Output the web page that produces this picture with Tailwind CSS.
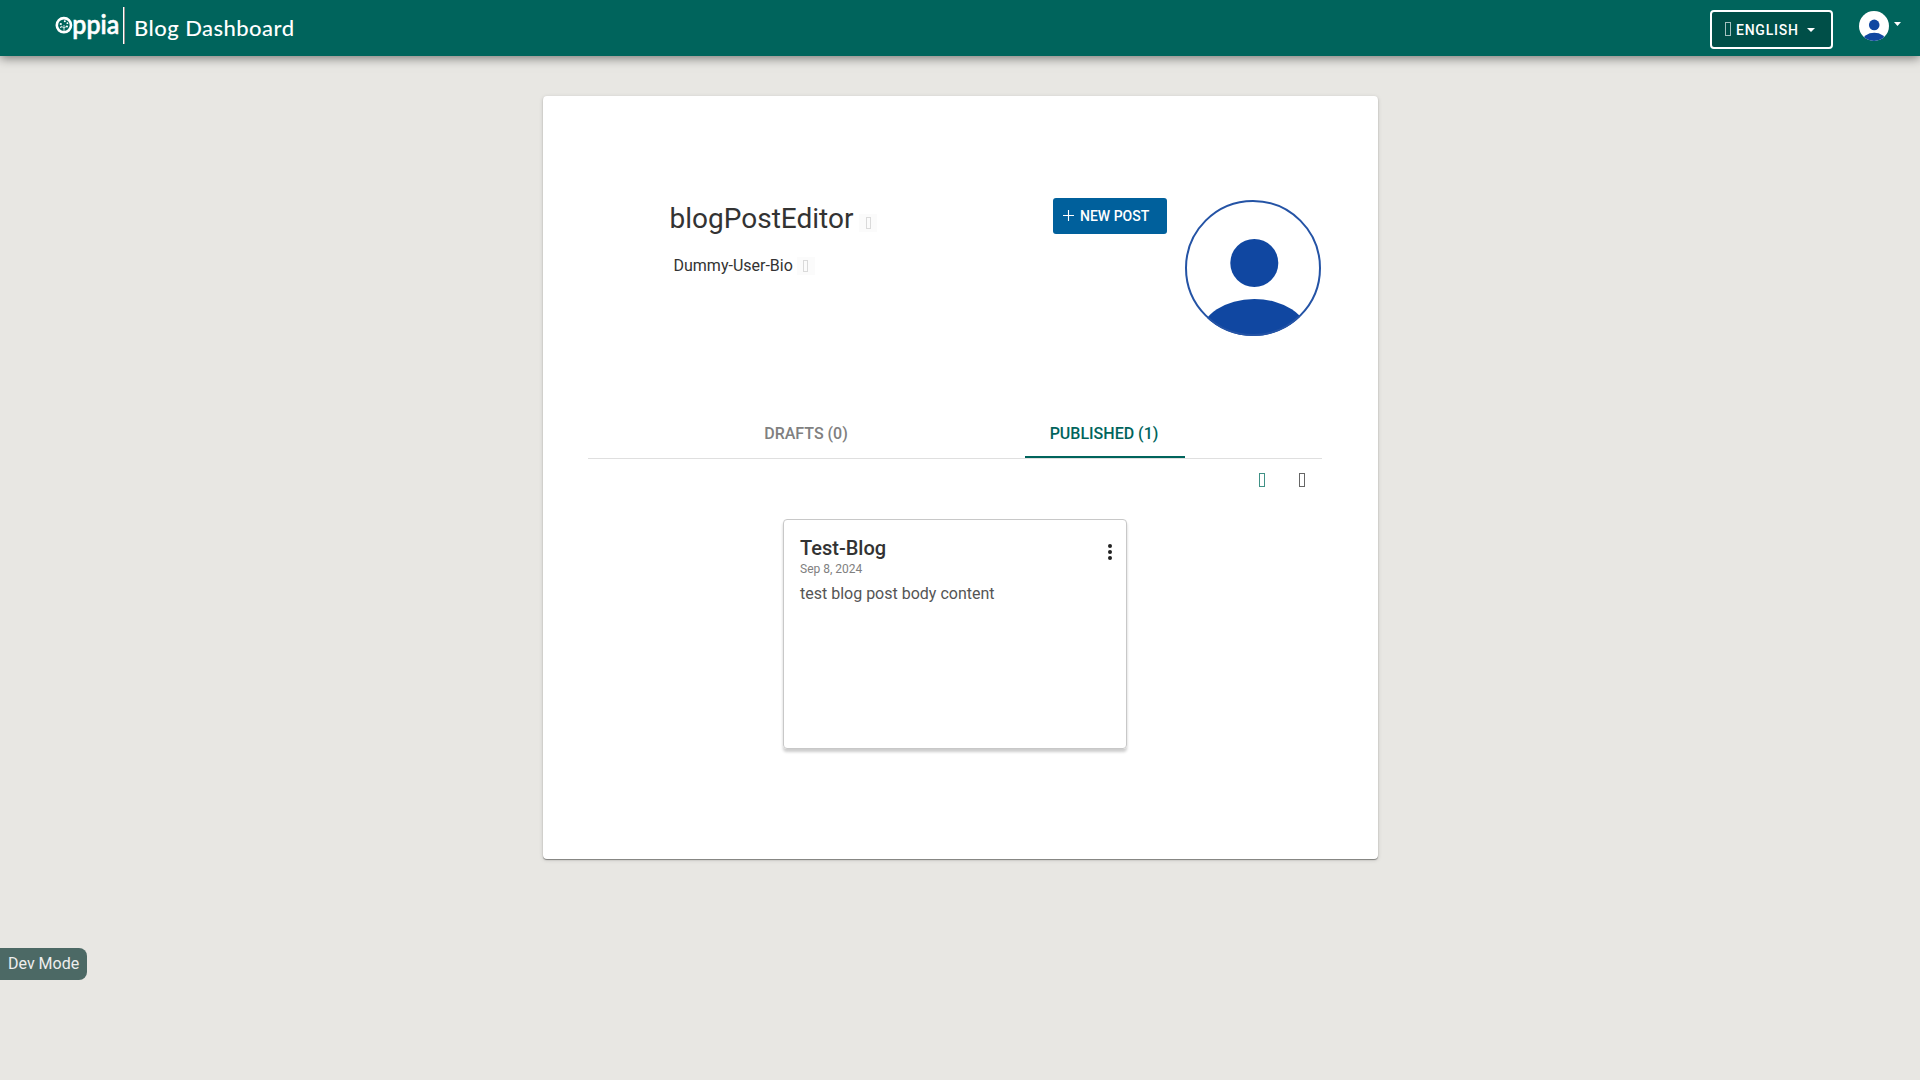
<!DOCTYPE html>
<html lang="en">
<head>
<meta charset="utf-8">
<title>Blog Dashboard | Oppia</title>
<script src="https://cdn.jsdelivr.net/npm/@tailwindcss/browser@4"></script>
</head>
<body class="min-h-screen overflow-hidden bg-[#e8e7e3] font-['Roboto',sans-serif] text-[#333]">
<header class="flex h-14 items-start bg-[#00645c] pl-[54px] text-white shadow-[0_2px_10px_rgba(0,0,0,0.5)]">
  <div class="flex h-14">
    <svg class="h-14 w-[67px]" viewBox="0 0 67 56" fill="none" stroke="#fff">
      <circle cx="9.9" cy="25.2" r="7.1" stroke-width="2.6"/>
      <path d="M10 32v-7M10 28l-3-2M10 28l3-2" stroke-width=".8"/>
      <g fill="#fff" stroke="none"><circle cx="10.8" cy="21.3" r="1"/><circle cx="13.4" cy="23.2" r=".9"/><circle cx="6.8" cy="24" r="1.1"/><circle cx="13" cy="26.6" r="1"/><circle cx="6.8" cy="27.3" r=".8"/></g>
      <text x="18.3" y="34" fill="#fff" stroke="#fff" stroke-width=".5" font-family="Lato, sans-serif" font-weight="600" font-size="26" textLength="47" lengthAdjust="spacingAndGlyphs">ppia</text>
    </svg>
    <div class="mt-[7px] ml-[2px] h-[37px] w-[2px] border-r border-[#9a8f8d] bg-white"></div>
    <h1 class="ml-[9px] pt-[13px] font-['Lato',sans-serif] text-[22px] leading-[30px] font-medium tracking-[0.46px] whitespace-nowrap">Blog Dashboard</h1>
  </div>
  <button class="mt-[10px] ml-auto flex h-[39px] w-[123px] items-center rounded-[4px] border-2 border-white bg-[#004f48] pl-[13px]">
    <svg class="h-[14px] w-[6px] -translate-y-[1px]" viewBox="0 0 6 14" fill="none" stroke="#fff" stroke-opacity=".65"><rect x=".5" y=".5" width="5" height="13"/></svg>
    <span class="ml-[5px] text-sm font-medium tracking-[0.75px]">ENGLISH</span>
    <svg class="ml-[8px] h-1 w-2" viewBox="0 0 8 4" fill="#fff"><path d="M0 0h8L4 4z"/></svg>
  </button>
  <div class="mt-[11px] mr-[19px] ml-[26px] flex items-start gap-[5px]">
    <svg class="h-[30px] w-[30px]" viewBox="0 0 136 136"><defs><clipPath id="disc"><circle cx="68" cy="68" r="68"/></clipPath></defs><g clip-path="url(#disc)"><rect width="136" height="136" fill="#fff"/><g fill="#1047a1"><circle cx="69" cy="63" r="24"/><ellipse cx="69" cy="136" rx="53" ry="37"/></g></g></svg>
    <svg class="mt-[11px] h-1 w-[7px]" viewBox="0 0 8 4" preserveAspectRatio="none" fill="#fff"><path d="M0 0h8L4 4z"/></svg>
  </div>
</header>
<main class="mt-10 ml-[543px] flex h-[763px] w-[835px] flex-col rounded-[4px] bg-white shadow-[0_1px_1px_rgba(0,0,0,0.4),0_1px_4px_rgba(0,0,0,0.15)]">
  <section class="flex h-[305px] items-start pt-[102px] pl-[126px]">
    <div class="w-[384px] pt-[2px]">
      <div class="flex h-[38px] items-center">
        <h2 class="pl-[0.5px] text-[28px] leading-[38px]">blogPostEditor</h2>
        <span class="mt-[8px] ml-[6px] flex h-[18px] w-[18px] items-center justify-center bg-[#fbfbfb]"><svg class="h-3 w-[5px]" viewBox="0 0 5 12" fill="none" stroke="#dadada"><rect x=".5" y=".5" width="4" height="11"/></svg></span>
      </div>
      <div class="mt-[16px] flex h-6 items-center pl-[4.5px]">
        <p class="text-base leading-6">Dummy-User-Bio</p>
        <span class="ml-1 flex h-[18px] w-[18px] items-center justify-center bg-[#fbfbfb]"><svg class="h-3 w-[5px]" viewBox="0 0 5 12" fill="none" stroke="#dadada"><rect x=".5" y=".5" width="4" height="11"/></svg></span>
      </div>
    </div>
    <button class="flex h-9 w-[114px] items-center rounded-[3px] bg-[#00609c] pl-[10px] text-white">
      <svg class="h-[11px] w-[11px] -translate-y-[1px]" viewBox="0 0 11 11" stroke="#fff" stroke-width="1.1"><path d="M5.5 0v11M0 5.5h11"/></svg>
      <span class="ml-[6px] text-sm font-medium whitespace-nowrap">NEW POST</span>
    </button>
    <svg class="mt-[2px] ml-[18px] h-[136px] w-[136px]" viewBox="0 0 136 136"><g clip-path="url(#disc)" fill="#1047a1"><circle cx="69.3" cy="63" r="24"/><ellipse cx="69.3" cy="134" rx="53" ry="35"/></g><circle cx="68" cy="68" r="67" fill="none" stroke="#2453a5" stroke-width="2"/></svg>
  </section>
  <nav class="mr-[56px] ml-[45px] flex h-[58px] gap-[139px] border-b border-[#dfdfdf] pl-[138px] text-base font-medium">
    <button class="flex h-[57px] w-[160px] items-center justify-center pt-[9px] text-[#808080]">DRAFTS (0)</button>
    <button class="flex h-[57px] w-[160px] items-center justify-center border-b-2 border-[#00645c] pt-[11px] pr-[2px] text-[#00645c]">PUBLISHED (1)</button>
  </nav>
  <div class="mt-[14px] mr-[73px] flex justify-end gap-[34px]">
    <svg class="h-[14px] w-[6px]" viewBox="0 0 6 14" fill="none" stroke="#409186"><rect x=".5" y=".5" width="5" height="13"/></svg>
    <svg class="h-[14px] w-[6px]" viewBox="0 0 6 14" fill="none" stroke="#666"><rect x=".5" y=".5" width="5" height="13"/></svg>
  </div>
  <article class="mt-8 ml-[240px] flex h-[230px] w-[344px] items-start justify-between rounded-[4px] border border-[#c8c8c8] pt-[16px] pr-[14px] pl-4 shadow-[0_3px_3px_rgba(0,0,0,0.2)]">
    <div>
      <h3 class="text-xl leading-6 font-medium">Test-Blog</h3>
      <p class="mt-[1px] text-xs leading-4 text-[#808080]">Sep 8, 2024</p>
      <p class="mt-[5px] text-base leading-6 text-[#555]">test blog post body content</p>
    </div>
    <svg class="mt-[8px] h-4 w-1" viewBox="0 0 4 16" fill="#222"><circle cx="2" cy="2" r="2"/><circle cx="2" cy="8" r="2"/><circle cx="2" cy="14" r="2"/></svg>
  </article>
</main>
<div class="fixed top-[948px] left-0 flex h-8 w-[87px] items-center rounded-r-[8px] bg-[#4c6965] pl-2 text-base whitespace-nowrap text-[#eee]">Dev Mode</div>
</body>
</html>
